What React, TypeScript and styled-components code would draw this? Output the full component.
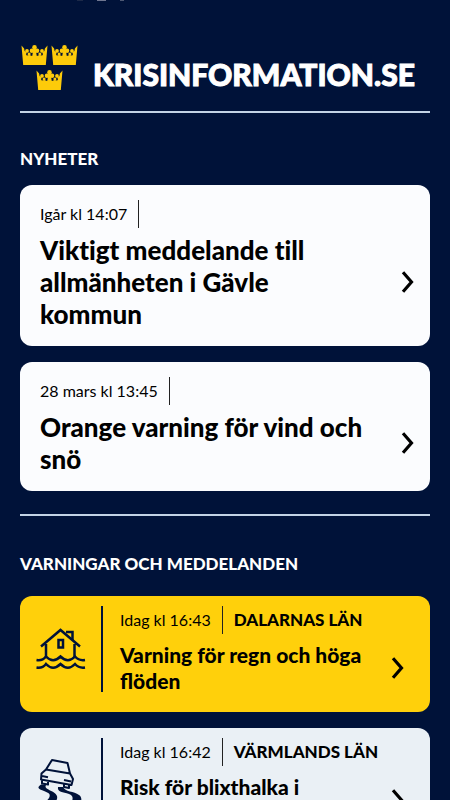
import React from 'react';
import styled, { createGlobalStyle } from 'styled-components';

const navy = '#001239';

const GlobalStyle = createGlobalStyle`
  *, *::before, *::after { box-sizing: border-box; }
  html, body { margin: 0; background: ${navy}; }
  body { font-family: Lato, "Liberation Sans", sans-serif; color: #000; }
`;

const Screen = styled.div`
  height: 100vh;
  overflow-y: auto;
  scrollbar-width: none;
  background: ${navy};
  padding: 0 20px 20px;
`;

const StatusBar = styled.div`
  height: 1px;
  display: flex;
  gap: 14px;
  padding-left: 57px;
`;

const StatusMark = styled.span<{ $width: number; $color: string }>`
  width: ${p => p.$width}px;
  height: 1px;
  background: ${p => p.$color};
`;

const Header = styled.header`
  display: flex;
  justify-content: space-between;
  height: 112px;
  padding-top: 43px;
  border-bottom: 2px solid #c3d3e6;
`;

const Brand = styled.a`
  display: flex;
  align-items: flex-start;
  gap: 15px;
  color: #fff;
  text-decoration: none;
`;

const Wordmark = styled.span`
  margin-top: 12px;
  font-size: 30px;
  line-height: 36px;
  font-weight: 900;
  -webkit-text-stroke: 1px #fff;
  white-space: nowrap;
`;

const SectionTitle = styled.h2`
  margin: 0 0 14px;
  color: #fff;
  font-size: 17px;
  line-height: 24px;
  font-weight: 900;
`;

const Section = styled.section`
  padding: 34px 0 23px;
  & + & {
    padding-top: 36px;
    border-top: 2px solid #c3d3e6;
  }
  & + & > ${SectionTitle} { margin-bottom: 20px; }
`;

const List = styled.ul`
  list-style: none;
  margin: 0;
  padding: 0;
  display: grid;
  gap: 16px;
`;

const NewsCard = styled.a`
  display: block;
  padding: 15px 16px 16px 20px;
  border-radius: 12px;
  background: #fbfcfe;
  color: #000;
  text-decoration: none;
`;

const AlertCard = styled.a<{ $tone: string }>`
  display: grid;
  grid-template-columns: 83px 1fr;
  padding: 10px 26px 18px 0;
  border-radius: 12px;
  background: ${p => p.$tone};
  color: #000;
  text-decoration: none;
`;

const IconCell = styled.div`
  display: flex;
  justify-content: center;
  align-items: center;
  height: 86px;
  border-right: 2px solid ${navy};
`;

const AlertBody = styled.div`
  padding-left: 17px;
`;

const Meta = styled.div`
  display: flex;
  align-items: center;
  height: 28px;
  font-size: 16px;
  line-height: 28px;
  white-space: nowrap;
`;

const Time = styled.time`
  height: 28px;
  padding-right: 11px;
  border-right: 1px solid #222;
  font-weight: 400;
`;

const Region = styled.span`
  padding-left: 11px;
  font-size: 17px;
  font-weight: 900;
`;

const TitleRow = styled.div<{ $small?: boolean }>`
  display: flex;
  align-items: center;
  justify-content: space-between;
  min-height: ${p => (p.$small ? '52px' : '64px')};
  margin-top: ${p => (p.$small ? '8px' : '6px')};
`;

const Title = styled.h3<{ $small?: boolean }>`
  align-self: flex-start;
  margin: 0;
  font-weight: 900;
  font-size: ${p => (p.$small ? '21px' : '26px')};
  line-height: ${p => (p.$small ? '26px' : '32px')};
  max-width: ${p => (p.$small ? '260px' : '334px')};
  font-variant-ligatures: ${p => (p.$small ? 'normal' : 'none')};
`;

const Chevron = () => (
  <svg width="13" height="22" viewBox="0 0 13 22" fill="none" stroke="#000" strokeWidth="3.2" aria-hidden="true">
    <path d="M2 1.2 10.5 11 2 20.8" />
  </svg>
);

const Crown = ({ x, y }: { x: number; y: number }) => (
  <g transform={`translate(${x} ${y})`}>
    <path d="M0 0.500 2.600 3.500 3.800 9.500 5.500 10.600 8 9.900 10.500 11 13 10 15.500 11 18 9.900 20.500 10.600 22.200 9.500 23.400 3.500 26 0.500 24.300 20H1.700Z" />
    <path d="M11.800 4h2.400l1 7h-4.400Z" />
    <circle cx="13" cy="2.400" r="2.300" />
    <circle cx="10.400" cy="5.700" r="2.200" />
    <circle cx="15.600" cy="5.700" r="2.200" />
    <circle cx="5.500" cy="5.900" r="1.900" />
    <circle cx="20.500" cy="5.900" r="1.900" />
    <path d="M2.500 6 5 7 4.500 11H2.500ZM23.500 6 21 7l.5 4h2Z" />
    <circle cx="7.600" cy="9" r="1.500" />
    <circle cx="18.400" cy="9" r="1.500" />
  </g>
);

const Crowns = () => (
  <svg width="58" height="48" viewBox="0 0 58 48" fill="#fdcb0a" role="img" aria-label="Tre kronor">
    <Crown x={1.5} y={1} />
    <Crown x={31.5} y={1} />
    <Crown x={16.5} y={26} />
  </svg>
);

const FloodIcon = () => (
  <svg width="50" height="42" viewBox="0 0 50 42" fill="none" stroke={navy} strokeWidth="2.5" aria-hidden="true">
    <path d="M5 18.500 24.500 2 44 18.500M10 16v13M38.500 16v13" />
    <path d="M30 4h6.500v8M22.500 12h4.500v7.500h-4.500z" />
    <path d="M0.500 32Q6.500 33 10 28.500Q17 36 24.500 28.500Q32 36 39 28.500Q43 33 49 32" />
    <path d="M0.500 39.500Q6.500 40.500 10 36Q17 43.500 24.500 36Q32 43.500 39 36Q43 40.500 49 39.500" />
  </svg>
);

const SkidIcon = () => (
  <svg width="50" height="46" viewBox="0 0 50 46" fill="none" stroke={navy} strokeWidth="2" strokeLinejoin="round" aria-hidden="true">
    <path d="M16 2 31.500 5 34 15.500 10 11.500ZM10 11.500 5.500 15.500 5 21.500 35.500 27 37 21 34 15.500M6 18l6 1.200M28 22l7 1.500M6 21.500v4l6 1v-4M28 26v3l5 1v-3" />
    <path d="M5 26.500C0 30 3 31 8 33C13 35 15 36 13 40C11 43 8 44 9 46H19C19 43 22 42 21 38C19 32 7 32 10 27Z" fill={navy} stroke="none" />
    <path d="M22 29C21 34 27 34 33 36C38 38 37 41 35 46H44C46 43 46 39 43 37C38 33 29 34 27 29Z" fill={navy} stroke="none" />
  </svg>
);

const news = [
  { time: 'Igår kl 14:07', title: 'Viktigt meddelande till allmänheten i Gävle kommun' },
  { time: '28 mars kl 13:45', title: 'Orange varning för vind och snö' },
];

const alerts = [
  { time: 'Idag kl 16:43', region: 'DALARNAS LÄN', title: 'Varning för regn och höga flöden', tone: '#ffd00b', icon: <FloodIcon /> },
  { time: 'Idag kl 16:42', region: 'VÄRMLANDS LÄN', title: 'Risk för blixthalka i', tone: '#eaf0f5', icon: <SkidIcon /> },
];

export default function App() {
  return (
    <Screen>
      <GlobalStyle />
      <StatusBar aria-hidden="true">
        <StatusMark $width={6} $color="#1c2948" />
        <StatusMark $width={9} $color="#6f7690" />
        <StatusMark $width={4} $color="#4d5873" />
      </StatusBar>
      <Header>
        <Brand href="#">
          <Crowns />
          <Wordmark>KRISINFORMATION.SE</Wordmark>
        </Brand>
      </Header>
      <main>
        <Section>
          <SectionTitle>NYHETER</SectionTitle>
          <List>
            {news.map(n => (
              <li key={n.title}>
                <NewsCard href="#">
                  <Meta><Time>{n.time}</Time></Meta>
                  <TitleRow>
                    <Title>{n.title}</Title>
                    <Chevron />
                  </TitleRow>
                </NewsCard>
              </li>
            ))}
          </List>
        </Section>
        <Section>
          <SectionTitle>VARNINGAR OCH MEDDELANDEN</SectionTitle>
          <List>
            {alerts.map(a => (
              <li key={a.title}>
                <AlertCard href="#" $tone={a.tone}>
                  <IconCell>{a.icon}</IconCell>
                  <AlertBody>
                    <Meta><Time>{a.time}</Time><Region>{a.region}</Region></Meta>
                    <TitleRow $small>
                      <Title $small>{a.title}</Title>
                      <Chevron />
                    </TitleRow>
                  </AlertBody>
                </AlertCard>
              </li>
            ))}
          </List>
        </Section>
      </main>
    </Screen>
  );
}
